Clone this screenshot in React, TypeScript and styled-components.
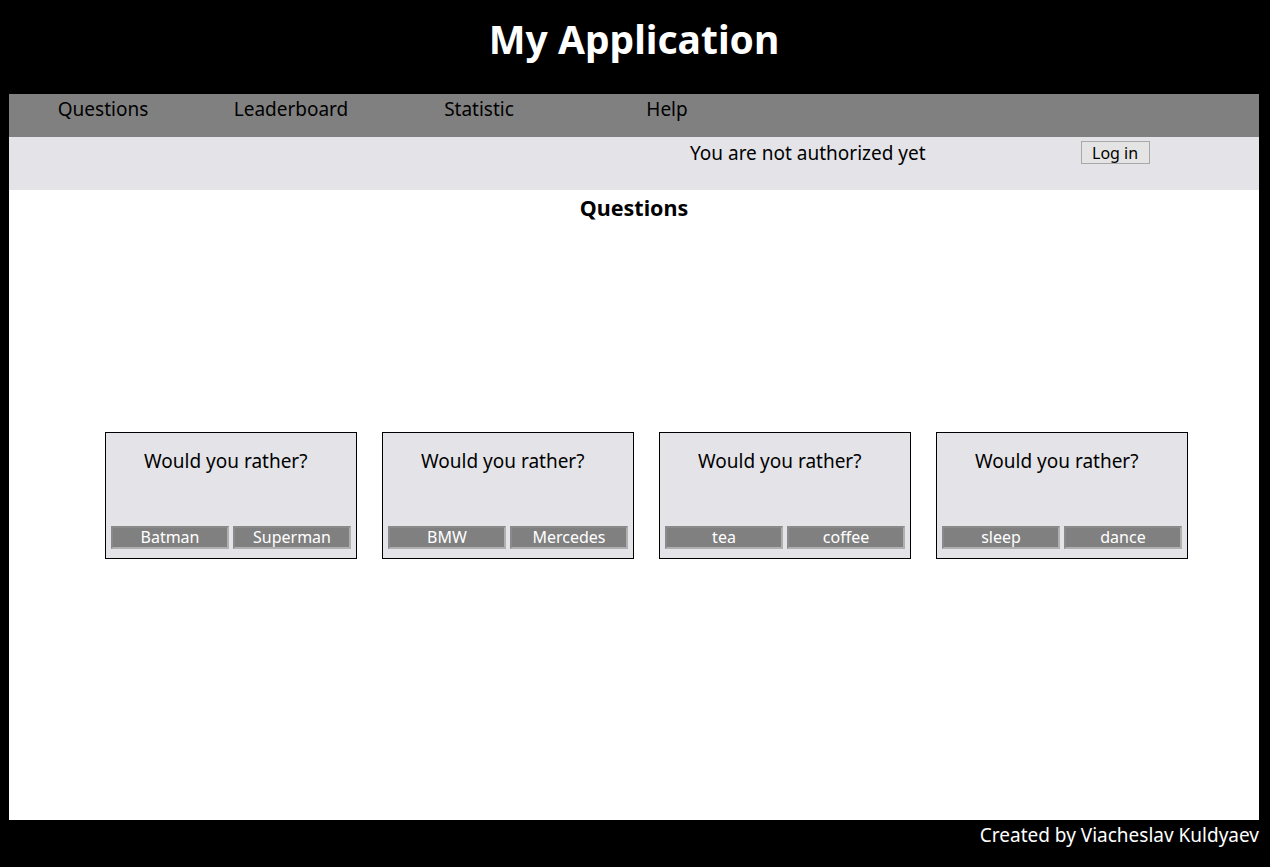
import styled, { createGlobalStyle } from 'styled-components';

const GlobalStyle = createGlobalStyle`
  html, body {
    margin: 0;
    padding: 0;
    background: #000;
    font-family: 'Noto Sans', 'Open Sans', sans-serif;
  }
`;

interface Question {
  id: number;
  optionOne: string;
  optionTwo: string;
}

const questions: Question[] = [
  { id: 1, optionOne: 'Batman', optionTwo: 'Superman' },
  { id: 2, optionOne: 'BMW', optionTwo: 'Mercedes' },
  { id: 3, optionOne: 'tea', optionTwo: 'coffee' },
  { id: 4, optionOne: 'sleep', optionTwo: 'dance' },
];

const navItems = ['Questions', 'Leaderboard', 'Statistic', 'Help'];

export default function App() {
  return (
    <>
      <GlobalStyle />
      <Page>
        <Header>My Application</Header>
        <Nav>
          {navItems.map((item) => (
            <NavItem key={item}>{item}</NavItem>
          ))}
        </Nav>
        <AuthBar>
          <AuthText>You are not authorized yet</AuthText>
          <LoginButton>Log in</LoginButton>
        </AuthBar>
        <Main>
          <Title>Questions</Title>
          <CardList>
            {questions.map((q) => (
              <Card key={q.id}>
                <CardTitle>Would you rather?</CardTitle>
                <Options>
                  <Option>{q.optionOne}</Option>
                  <Option>{q.optionTwo}</Option>
                </Options>
              </Card>
            ))}
          </CardList>
        </Main>
        <Footer>Created by Viacheslav Kuldyaev</Footer>
      </Page>
    </>
  );
}

const Page = styled.div`
  display: flex;
  flex-direction: column;
  width: 1250px;
  margin: 0 9px;
  min-height: 867px;
`;

const Header = styled.h1`
  margin: 0;
  height: 94px;
  padding-top: 14px;
  box-sizing: border-box;
  text-align: center;
  color: #fff;
  font-size: 39px;
  font-weight: 700;
  line-height: 50px;
`;

const Nav = styled.nav`
  display: flex;
  height: 43px;
  background: #808080;
`;

const NavItem = styled.div`
  width: 188px;
  text-align: center;
  font-size: 19px;
  line-height: 30px;
  color: #000;
`;

const AuthBar = styled.div`
  display: flex;
  align-items: flex-start;
  height: 53px;
  padding-top: 3px;
  box-sizing: border-box;
  background: #e4e4e8;
`;

const AuthText = styled.span`
  margin-left: 681px;
  font-size: 19px;
  line-height: 26px;
`;

const LoginButton = styled.button`
  margin-left: 155px;
  margin-top: 1px;
  width: 69px;
  height: 23px;
  padding: 0;
  font-family: inherit;
  font-size: 16px;
  line-height: 20px;
  background: #e4e4e4;
  border: 1px solid #a8a8a8;
  color: #000;
`;

const Main = styled.main`
  flex: 1;
  display: flex;
  flex-direction: column;
  background: #fff;
  height: 630px;
`;

const Title = styled.h2`
  margin: 4px 0 0;
  text-align: center;
  font-size: 21.5px;
  font-weight: 700;
  line-height: 28px;
`;

const CardList = styled.div`
  display: flex;
  gap: 25px;
  padding-left: 96px;
  margin-top: 210px;
`;

const Card = styled.div`
  display: flex;
  flex-direction: column;
  justify-content: space-between;
  width: 252px;
  height: 127px;
  box-sizing: border-box;
  border: 1px solid #000;
  background: #e4e4e8;
  padding: 15px 5px 9px;
`;

const CardTitle = styled.p`
  margin: 0 0 0 33px;
  font-size: 19px;
  line-height: 26px;
`;

const Options = styled.div`
  display: flex;
  gap: 4px;
`;

const Option = styled.button`
  width: 118px;
  height: 23px;
  padding: 0;
  box-sizing: border-box;
  background: #808080;
  border: 2px solid;
  border-color: #8a8a8a #b0b0b0 #b0b0b0 #8a8a8a;
  color: #fff;
  font-family: inherit;
  font-size: 16px;
  line-height: 19px;
`;

const Footer = styled.footer`
  height: 47px;
  text-align: right;
  color: #fff;
  font-size: 19px;
  line-height: 30px;
`;
